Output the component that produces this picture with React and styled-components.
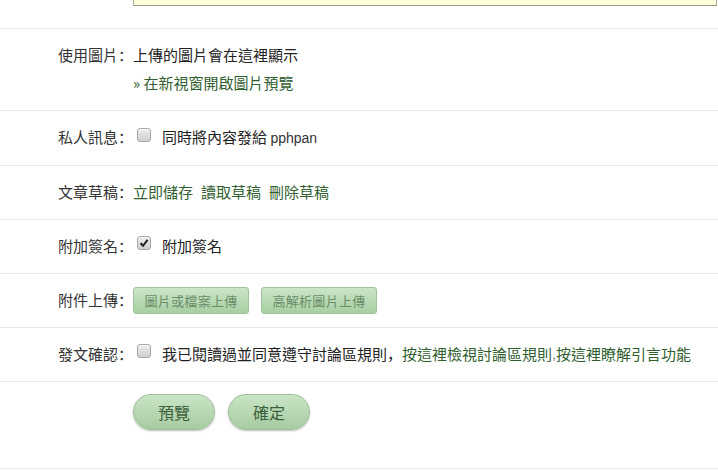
import React from "react";
import styled, { createGlobalStyle } from "styled-components";

const Global = createGlobalStyle`
  html, body { margin: 0; padding: 0; background: #ffffff; }
  body {
    font-family: "Noto Sans CJK TC", "Liberation Sans", sans-serif;
    font-size: 15px;
    color: #333333;
  }
`;

const Form = styled.div`
  width: 718px;
`;

const TopRow = styled.div`
  display: grid;
  grid-template-columns: 133px 1fr;
  height: 28px;
`;

const EditorTail = styled.div`
  height: 5px;
  margin-right: 1px;
  background: #fffedc;
  border-left: 1px solid #b3ae98;
  border-right: 1px solid #b3ae98;
  border-bottom: 1px solid #9d9a88;
`;

const Row = styled.div`
  display: grid;
  grid-template-columns: 133px 1fr;
  border-top: 1px solid #e8e8e8;
  padding: ${(p) => (p.$last ? "12px 0 38px" : "12px 0 13px")};
  border-bottom: ${(p) => (p.$last ? "1px solid #e8e8e8" : "none")};
  line-height: 28px;
`;

const Label = styled.div`
  text-align: right;
  color: #333333;
  white-space: nowrap;
`;

const Punct = styled.span`
  font-family: "Noto Sans CJK SC", sans-serif;
`;

const Field = styled.div`
  display: flex;
  flex-direction: ${(p) => (p.$column ? "column" : "row")};
  align-items: ${(p) => (p.$column ? "flex-start" : "center")};
  gap: ${(p) => p.$gap || 0}px;
  white-space: nowrap;
  color: #222222;
`;

const Link = styled.a`
  color: #31602f;
  text-decoration: none;
  cursor: pointer;
`;

const Latin = styled.span`
  font-family: "Liberation Sans", Arial, sans-serif;
  font-size: 14px;
  color: #333333;
`;

const Comma = styled.span`
  font-family: "Liberation Sans", Arial, sans-serif;
  font-size: 14px;
  color: #777777;
`;

const Box = styled.span`
  position: relative;
  display: inline-block;
  box-sizing: border-box;
  width: 14px;
  height: 14px;
  margin: 0 11px 6px 4px;
  border: 1px solid #a8a8a8;
  border-radius: 3px;
  background: linear-gradient(#eeeeee, #cfcfcf);
  box-shadow: inset 0 1px 0 rgba(255, 255, 255, 0.7);
  flex: none;
  svg {
    position: absolute;
    left: 1px;
    top: 1px;
  }
`;

const Checkbox = ({ checked }) => (
  <Box role="checkbox" aria-checked={checked}>
    {checked && (
      <svg width="10" height="10" viewBox="0 0 10 10">
        <path d="M1.5 5.2 L4 7.8 L8.6 1.8" fill="none" stroke="#222" strokeWidth="2" />
      </svg>
    )}
  </Box>
);

const UploadButton = styled.button`
  box-sizing: border-box;
  width: 116px;
  height: 27px;
  padding: 0;
  border: 1px solid #9fc49a;
  border-radius: 3px;
  background: linear-gradient(#cbe5c7, #a7cea2);
  color: #6a8c69;
  font-family: "Noto Sans CJK TC", sans-serif;
  font-size: 13px;
  letter-spacing: 0.3px;
  line-height: 25px;
  cursor: pointer;
`;

const PillButton = styled.button`
  box-sizing: border-box;
  width: 82px;
  height: 36px;
  padding: 0;
  border: 1px solid #9dbf98;
  border-radius: 18px;
  background: linear-gradient(#cae4c6, #a6cba1);
  box-shadow: 0 1px 2px rgba(0, 0, 0, 0.25);
  color: #3c5f3b;
  font-family: "Noto Sans CJK TC", sans-serif;
  font-size: 16px;
  line-height: 34px;
  cursor: pointer;
`;

const Colon = () => <Punct>：</Punct>;

export default function App() {
  return (
    <>
      <Global />
      <Form>
        <TopRow>
          <div />
          <EditorTail />
        </TopRow>

        <Row>
          <Label>使用圖片<Colon /></Label>
          <Field $column>
            <span>上傳的圖片會在這裡顯示</span>
            <Link>» 在新視窗開啟圖片預覽</Link>
          </Field>
        </Row>

        <Row>
          <Label>私人訊息<Colon /></Label>
          <Field>
            <Checkbox />
            <span>同時將內容發給 <Latin>pphpan</Latin></span>
          </Field>
        </Row>

        <Row>
          <Label>文章草稿<Colon /></Label>
          <Field $gap={8}>
            <Link>立即儲存</Link>
            <Link>讀取草稿</Link>
            <Link>刪除草稿</Link>
          </Field>
        </Row>

        <Row>
          <Label>附加簽名<Colon /></Label>
          <Field>
            <Checkbox checked />
            <span>附加簽名</span>
          </Field>
        </Row>

        <Row>
          <Label>附件上傳<Colon /></Label>
          <Field $gap={12}>
            <UploadButton>圖片或檔案上傳</UploadButton>
            <UploadButton>高解析圖片上傳</UploadButton>
          </Field>
        </Row>

        <Row>
          <Label>發文確認<Colon /></Label>
          <Field>
            <Checkbox />
            <span>我已閱讀過並同意遵守討論區規則<Punct>，</Punct></span>
            <Link>按這裡檢視討論區規則</Link>
            <Comma>,</Comma>
            <Link>按這裡瞭解引言功能</Link>
          </Field>
        </Row>

        <Row $last>
          <div />
          <Field $gap={13}>
            <PillButton>預覽</PillButton>
            <PillButton>確定</PillButton>
          </Field>
        </Row>
      </Form>
    </>
  );
}
